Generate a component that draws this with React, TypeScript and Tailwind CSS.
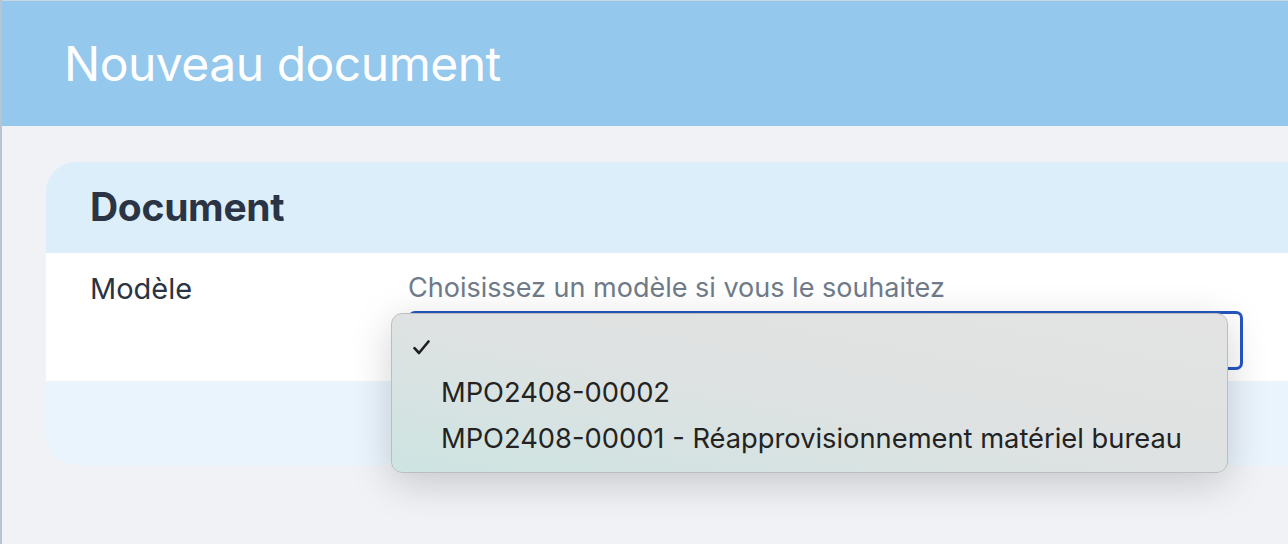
import React from "react";

const options = [
	{ label: "", checked: true },
	{ label: "MPO2408-00002", checked: false },
	{ label: "MPO2408-00001 - Réapprovisionnement matériel bureau", checked: false },
];

function Check() {
	return (
		<svg width="17" height="15" viewBox="0 0 17 15" className="text-[#1f1f1f]">
			<path d="M1.5 8.2 L6 13 L15.5 1.5" fill="none" stroke="currentColor" strokeWidth="2.6" strokeLinecap="round" strokeLinejoin="round" />
		</svg>
	);
}

export default function App() {
	return (
		<div className="flex flex-col h-[544px] overflow-hidden bg-[#f1f2f6] border-l-2 border-[#b9c4d3] font-['Inter',sans-serif]">
			<header className="h-[126px] shrink-0 bg-[#95c8ed] border-t border-[#c9d7e3] flex items-center pl-[62px]">
				<h1 className="text-[48px] font-normal text-white tracking-[-0.5px] leading-none">Nouveau document</h1>
			</header>

			<main className="pt-9 pl-[44px]">
				<section className="rounded-l-[30px]">
					<div className="h-[91px] bg-[#ddeefb] rounded-tl-[30px] flex items-center pl-[44px]">
						<h2 className="text-[39px] font-bold text-[#2a3444] tracking-[-0.3px]">Document</h2>
					</div>

					<div className="h-[128px] bg-white flex pl-[44px]">
						<label className="w-[318px] pt-[21px] text-[29px] text-[#2a3444] leading-none">Modèle</label>
						<div className="flex flex-col pt-[21px]">
							<p className="text-[27px] text-[#707b89] leading-none">Choisissez un modèle si vous le souhaitez</p>
							<div className="relative mt-[10px] w-[835px] h-[59px] rounded-[7px] border-[3px] border-[#2457c0]">
								<div className="absolute left-[-20px] top-[-1px] w-[837px] py-[10px] rounded-[11px] border border-[#bdbdbd] bg-linear-to-tr from-[#cde4e2] via-[#dfe2e2] to-[#e3e3e3] shadow-[0_10px_40px_rgba(0,0,0,0.18)] z-10">
									{options.map((o, i) => (
										<div key={i} className="h-[46px] flex items-center">
											<span className="w-[49px] pl-[21px] flex items-center">{o.checked && <Check />}</span>
											<span className="text-[27.3px] text-[#232323] leading-none">{o.label}</span>
										</div>
									))}
								</div>
							</div>
						</div>
					</div>

					<div className="h-[84px] bg-[#eaf4fd] rounded-bl-[30px]" />
				</section>
			</main>
		</div>
	);
}
